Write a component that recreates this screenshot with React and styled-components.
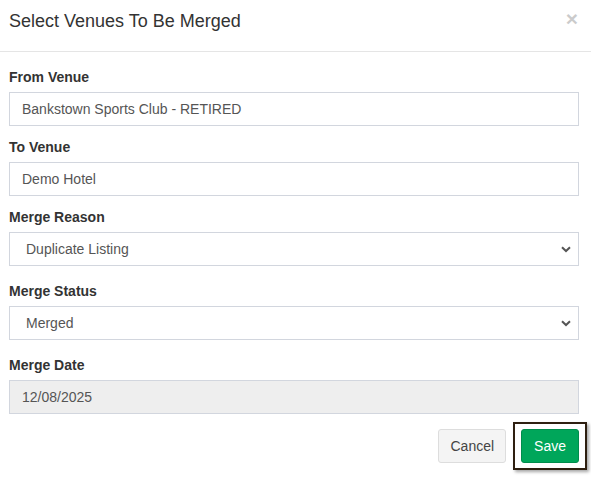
import React from 'react';
import styled, { createGlobalStyle } from 'styled-components';

const GlobalStyle = createGlobalStyle`
    html, body {
        margin: 0;
        padding: 0;
        background: #ffffff;
        font-family: "Liberation Sans", Arial, sans-serif;
    }
`;

const Modal = styled.div`
    width: 591px;
    height: 488px;
    background: #ffffff;
    box-sizing: border-box;
`;

const Header = styled.div`
    display: flex;
    justify-content: space-between;
    align-items: flex-start;
    padding: 8px 13px 17px 9px;
    border-bottom: 1px solid #e5e5e5;
`;

const Title = styled.h4`
    margin: 0;
    font-size: 18px;
    font-weight: 400;
    line-height: 26px;
    color: #333333;
`;

const Close = styled.button`
    border: none;
    background: none;
    padding: 0;
    font-family: "Liberation Sans", Arial, sans-serif;
    font-size: 21px;
    font-weight: 700;
    line-height: 21px;
    color: #000;
    opacity: 0.2;
    cursor: pointer;
`;

const Body = styled.div`
    display: flex;
    flex-direction: column;
    padding: 15px 12px 0 9px;
`;

const Group = styled.div`
    display: flex;
    flex-direction: column;
    margin-bottom: ${({ gap }) => gap}px;
`;

const Label = styled.label`
    font-size: 14px;
    font-weight: 700;
    line-height: 20px;
    color: #333333;
    margin-bottom: 5px;
`;

const Input = styled.input`
    box-sizing: border-box;
    height: 34px;
    width: 100%;
    padding: 6px 12px;
    font-family: "Liberation Sans", Arial, sans-serif;
    font-size: 14px;
    color: #555555;
    border: 1px solid #d2d6de;
    border-radius: 0;
    background: ${({ readOnly }) => (readOnly ? '#eeeeee' : '#ffffff')};
    outline: none;
`;

const SelectWrap = styled.div`
    position: relative;
`;

const Select = styled.select`
    box-sizing: border-box;
    height: 34px;
    width: 100%;
    padding: 6px 16px;
    font-family: "Liberation Sans", Arial, sans-serif;
    font-size: 14px;
    color: #555555;
    border: 1px solid #d2d6de;
    border-radius: 0;
    background: #ffffff;
    appearance: none;
    outline: none;
`;

const Chevron = styled.svg`
    position: absolute;
    right: 8px;
    top: 14px;
    pointer-events: none;
`;

const Footer = styled.div`
    display: flex;
    justify-content: flex-end;
    align-items: center;
    gap: 15px;
    padding: 15px 12px 0 9px;
`;

const Button = styled.button`
    box-sizing: border-box;
    height: 34px;
    padding: 6px ${({ primary }) => (primary ? 12 : 11)}px;
    font-family: "Liberation Sans", Arial, sans-serif;
    font-size: 14px;
    line-height: 20px;
    border-radius: 3px;
    border: 1px solid ${({ primary }) => (primary ? '#008d4c' : '#dddddd')};
    background: ${({ primary }) => (primary ? '#00a65a' : '#f4f4f4')};
    color: ${({ primary }) => (primary ? '#ffffff' : '#444444')};
    cursor: pointer;
`;

const Highlight = styled.span`
    position: relative;
    display: inline-flex;

    &::after {
        content: '';
        position: absolute;
        left: -8px;
        top: -7px;
        right: -8px;
        bottom: -7px;
        border: 2px solid #2e1f10;
        box-shadow: 2px 2px 3px rgba(0, 0, 0, 0.35);
        pointer-events: none;
    }
`;

const ChevronIcon = () => (
    <Chevron width="10" height="7" viewBox="0 0 10 7">
        <path d="M1 1.2 L5 5 L9 1.2" fill="none" stroke="#555" strokeWidth="2" />
    </Chevron>
);

const App = () => {
    return (
        <>
            <GlobalStyle />
            <Modal>
                <Header>
                    <Title>Select Venues To Be Merged</Title>
                    <Close aria-label="Close">×</Close>
                </Header>
                <Body>
                    <Group gap={11}>
                        <Label>From Venue</Label>
                        <Input defaultValue="Bankstown Sports Club - RETIRED" />
                    </Group>
                    <Group gap={11}>
                        <Label>To Venue</Label>
                        <Input defaultValue="Demo Hotel" />
                    </Group>
                    <Group gap={15}>
                        <Label>Merge Reason</Label>
                        <SelectWrap>
                            <Select defaultValue="dup">
                                <option value="dup">Duplicate Listing</option>
                            </Select>
                            <ChevronIcon />
                        </SelectWrap>
                    </Group>
                    <Group gap={15}>
                        <Label>Merge Status</Label>
                        <SelectWrap>
                            <Select defaultValue="merged">
                                <option value="merged">Merged</option>
                            </Select>
                            <ChevronIcon />
                        </SelectWrap>
                    </Group>
                    <Group gap={0}>
                        <Label>Merge Date</Label>
                        <Input readOnly defaultValue="12/08/2025" />
                    </Group>
                </Body>
                <Footer>
                    <Button>Cancel</Button>
                    <Highlight>
                        <Button primary>Save</Button>
                    </Highlight>
                </Footer>
            </Modal>
        </>
    );
};

export default App;
